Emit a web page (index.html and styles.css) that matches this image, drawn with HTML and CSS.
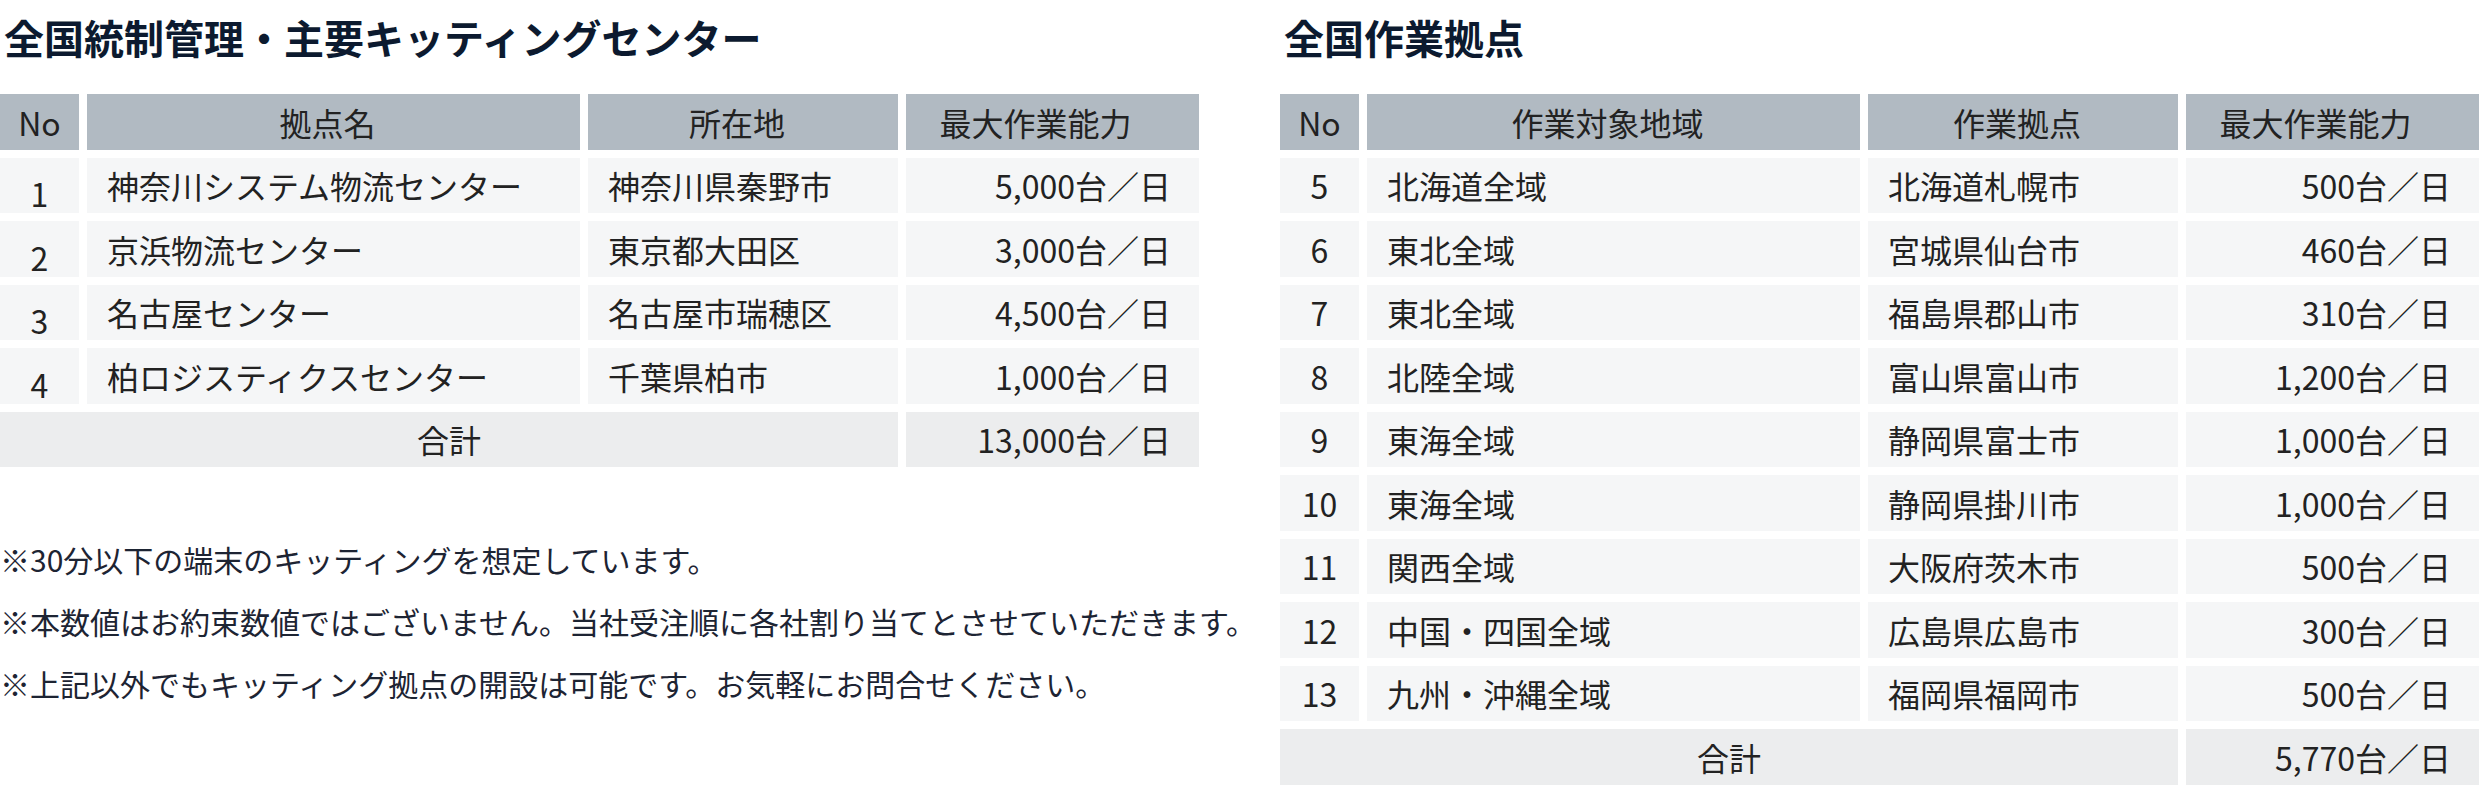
FILE: index.html
```html
<!DOCTYPE html>
<html lang="ja">
<head>
<meta charset="utf-8">
<title>キッティングセンター</title>
<link rel="stylesheet" href="styles.css">
</head>
<body>
<div class="page">
  <section class="block">
    <h2 class="title">全国統制管理・主要キッティングセンター</h2>
    <table class="sheet">
      <colgroup><col class="c-no"><col class="c-name"><col class="c-loc"><col class="c-cap"></colgroup>
      <thead>
        <tr><th class="no">No</th><th>拠点名</th><th>所在地</th><th class="cap">最大作業能力</th></tr>
      </thead>
      <tbody>
        <tr><td class="no low">1</td><td>神奈川システム物流センター</td><td>神奈川県秦野市</td><td class="cap">5,000台／日</td></tr>
        <tr><td class="no low">2</td><td>京浜物流センター</td><td>東京都大田区</td><td class="cap">3,000台／日</td></tr>
        <tr><td class="no low">3</td><td>名古屋センター</td><td>名古屋市瑞穂区</td><td class="cap">4,500台／日</td></tr>
        <tr><td class="no low">4</td><td>柏ロジスティクスセンター</td><td>千葉県柏市</td><td class="cap">1,000台／日</td></tr>
      </tbody>
      <tfoot>
        <tr><td colspan="3" class="sum">合計</td><td class="cap">13,000台／日</td></tr>
      </tfoot>
    </table>
    <div class="notes">
      <p>※30分以下の端末のキッティングを想定しています。</p>
      <p>※本数値はお約束数値ではございません。当社受注順に各社割り当てとさせていただきます。</p>
      <p>※上記以外でもキッティング拠点の開設は可能です。お気軽にお問合せください。</p>
    </div>
  </section>
  <section class="block">
    <h2 class="title">全国作業拠点</h2>
    <table class="sheet">
      <colgroup><col class="c-no"><col class="c-name"><col class="c-loc"><col class="c-cap"></colgroup>
      <thead>
        <tr><th class="no">No</th><th>作業対象地域</th><th>作業拠点</th><th class="cap">最大作業能力</th></tr>
      </thead>
      <tbody>
        <tr><td class="no">5</td><td>北海道全域</td><td>北海道札幌市</td><td class="cap">500台／日</td></tr>
        <tr><td class="no">6</td><td>東北全域</td><td>宮城県仙台市</td><td class="cap">460台／日</td></tr>
        <tr><td class="no">7</td><td>東北全域</td><td>福島県郡山市</td><td class="cap">310台／日</td></tr>
        <tr><td class="no">8</td><td>北陸全域</td><td>富山県富山市</td><td class="cap">1,200台／日</td></tr>
        <tr><td class="no">9</td><td>東海全域</td><td>静岡県富士市</td><td class="cap">1,000台／日</td></tr>
        <tr><td class="no">10</td><td>東海全域</td><td>静岡県掛川市</td><td class="cap">1,000台／日</td></tr>
        <tr><td class="no">11</td><td>関西全域</td><td>大阪府茨木市</td><td class="cap">500台／日</td></tr>
        <tr><td class="no">12</td><td>中国・四国全域</td><td>広島県広島市</td><td class="cap">300台／日</td></tr>
        <tr><td class="no">13</td><td>九州・沖縄全域</td><td>福岡県福岡市</td><td class="cap">500台／日</td></tr>
      </tbody>
      <tfoot>
        <tr><td colspan="3" class="sum">合計</td><td class="cap">5,770台／日</td></tr>
      </tfoot>
    </table>
  </section>
</div>
</body>
</html>
```

FILE: styles.css
```css
html, body {
  margin: 0;
  padding: 0;
  background: #ffffff;
}

body {
  font-family: "Noto Sans CJK JP", "Noto Sans", sans-serif;
  color: #222222;
}

.page {
  display: grid;
  grid-template-columns: 1199px 1199px;
  column-gap: 81px;
  align-items: start;
  padding-top: 13px;
}

.title {
  margin: 0;
  padding-left: 4px;
  font-size: 40px;
  line-height: 48px;
  font-weight: 700;
  color: #0c1a2f;
  white-space: nowrap;
}

.sheet {
  border-collapse: separate;
  border-spacing: 8px;
  margin: 25px -8px 0;
  width: calc(100% + 16px);
  table-layout: fixed;
  font-size: 32px;
}

.c-no { width: 79px; }
.c-name { width: 493px; }
.c-loc { width: 310px; }
.c-cap { width: 293px; }

.sheet th,
.sheet td {
  box-sizing: border-box;
  height: 55.5px;
  padding: 0 20px;
  vertical-align: middle;
  line-height: 1.2;
  font-weight: 400;
  white-space: nowrap;
  color: #222222;
}

.sheet th {
  background: #b1bac2;
  text-align: center;
  padding: 0 20px 0 8px;
}

.sheet td {
  background: #f5f6f7;
  text-align: left;
}

.sheet th.no,
.sheet td.no {
  text-align: center;
  padding: 0;
}

.sheet td.low {
  vertical-align: bottom;
  line-height: 32px;
  padding-bottom: 4px;
}

.sheet td.cap {
  text-align: right;
  padding-right: 28px;
}

.sheet th.cap {
  text-align: center;
  padding: 0 34px 0 0;
}

.sheet tfoot td {
  background: #ecedee;
}

.sheet td.sum {
  text-align: center;
}

.notes {
  margin-top: 53px;
  font-size: 30px;
  line-height: 62px;
  color: #1d2433;
  white-space: nowrap;
}

.notes p {
  margin: 0;
}
```
